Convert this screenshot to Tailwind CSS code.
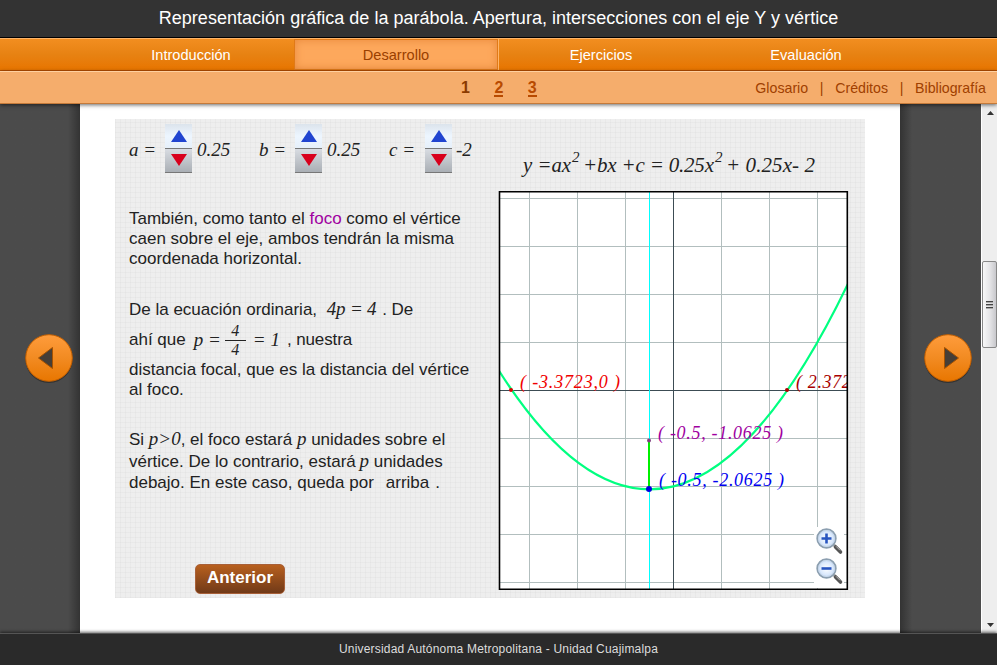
<!DOCTYPE html>
<html lang="es">
<head>
<meta charset="utf-8">
<title>Representación gráfica de la parábola</title>
<script src="https://cdn.jsdelivr.net/npm/@tailwindcss/browser@4"></script>
</head>
<body class="w-[997px] h-[665px] overflow-hidden flex flex-col font-['Liberation_Sans',Arial,sans-serif] bg-[#484848]">
<header class="shrink-0 h-[38px] bg-[#333] border-b border-black flex items-center justify-center text-[18px] tracking-[0.02px] text-white whitespace-nowrap"><span>Representación gráfica de la parábola. Apertura, intersecciones con el eje Y y vértice</span></header>
<nav class="shrink-0 h-[33px] flex text-[14.6px] text-white bg-linear-to-b from-[#f28e20] via-[#e78212] to-[#e87500] border-t border-t-[#ffb468] border-b border-b-[#b84f00] pl-[88px]">
  <a class="w-[206px] flex items-center justify-center pt-[2px]">Introducción</a>
  <a class="w-[204px] flex items-center justify-center pt-[2px] text-[#9a3f00] bg-[#fda85c] border border-[#e07a18] shadow-[inset_0_0_8px_#e8893c]">Desarrollo</a>
  <a class="w-[205px] flex items-center justify-center pt-[2px] border-l border-[#ffb468]">Ejercicios</a>
  <a class="w-[206px] flex items-center justify-center pt-[2px]">Evaluación</a>
</nav>
<div class="shrink-0 h-[33px] flex items-center bg-[#f5ad6c] border-t border-t-[#ffd0a0] border-b border-b-[#c47a3a] text-[#a04000] z-10 shadow-[0_1px_4px_rgba(0,0,0,.6)]">
  <div class="ml-[461px] pt-px flex gap-[24.5px] text-[16px] font-bold leading-[17px]"><span class="text-[#8a3a00]">1</span><span class="border-b-2 border-[#b84a00] text-[#b84a00] h-[18px]">2</span><span class="border-b-2 border-[#b84a00] text-[#b84a00] h-[18px]">3</span></div>
  <div class="ml-auto mr-[11px] pt-[2px] flex text-[14.2px] whitespace-nowrap"><span>Glosario</span><span class="w-[27px] text-center">|</span><span>Créditos</span><span class="w-[27px] text-center">|</span><span>Bibliografía</span></div>
</div>
<main class="h-[529px] shrink-0 flex bg-[#484848]">
  <div class="w-[80px] flex items-center justify-center bg-linear-to-r from-[#4b4b4b] from-85% to-[#333]">
    <svg class="relative left-[9px] -top-[11px]" width="52" height="54" viewBox="0 0 52 54"><defs><linearGradient id="o" x1="0" y1="0" x2="0" y2="1"><stop offset="0" stop-color="#ff9c3c"/><stop offset=".5" stop-color="#f28b22"/><stop offset="1" stop-color="#e87600"/></linearGradient></defs><circle cx="26" cy="28.500" r="23.500" fill="#222" opacity=".6"/><circle cx="26" cy="27" r="23.300" fill="url(#o)" stroke="#c45f00"/><path d="M15.500 27 L29.500 16.500 V37.500Z" fill="#453e37" stroke="#a65200"/></svg>
  </div>
  <div class="w-[820px] bg-white pl-[35px] pt-[15px]">
    <section class="w-[750px] h-[479px] flex bg-[#eee] bg-[repeating-linear-gradient(0deg,rgba(0,0,0,.022)_0_1px,transparent_1px_5px),repeating-linear-gradient(90deg,rgba(0,0,0,.022)_0_1px,transparent_1px_5px)] text-[#222]">
      <div class="w-[383px] pl-[14px] flex flex-col">
        <div class="flex h-[60px] pt-[6px] font-['Liberation_Serif',serif] italic text-[19px] leading-[49px]">
          <div class="w-[130px] flex"><span class="w-[36px] whitespace-nowrap">a =</span><svg class="-mt-px" width="27" height="49" viewBox="0 0 27 49"><defs><linearGradient id="u" x1="0" y1="0" x2="0" y2="1"><stop offset="0" stop-color="#dce4ec"/><stop offset=".5" stop-color="#edf6ff"/><stop offset="1" stop-color="#e6f0fa"/></linearGradient><linearGradient id="d" x1="0" y1="0" x2="0" y2="1"><stop offset="0" stop-color="#d8dce2"/><stop offset="1" stop-color="#aaafb5"/></linearGradient><g id="spin"><path d="M0 0H27V24H0Z" fill="url(#u)"/><path d="M0 25H27V48H0Z" fill="url(#d)"/><path d="M0 24.500H27M0 48.500H27" stroke="#777"/><path d="M14 6L22 18H6Z" fill="#2044d0"/><path d="M14 42L22 30H6Z" fill="#d8001c"/></g></defs><use href="#spin"/></svg><span class="ml-[5px]">0.25</span></div>
          <div class="w-[130px] flex"><span class="w-[36px] whitespace-nowrap">b =</span><svg class="-mt-px" width="27" height="49" viewBox="0 0 27 49"><use href="#spin"/></svg><span class="ml-[5px]">0.25</span></div>
          <div class="flex"><span class="w-[36px] whitespace-nowrap">c =</span><svg class="-mt-px" width="27" height="49" viewBox="0 0 27 49"><use href="#spin"/></svg><span class="ml-[4px]">-2</span></div>
        </div>
        <div class="mt-[30px] text-[17px] leading-[20px] whitespace-nowrap">
          <p>También, como tanto el <span class="text-[#a000a0]">foco</span> como el vértice</p>
          <p>caen sobre el eje, ambos tendrán la misma</p>
          <p>coordenada horizontal.</p>
        </div>
        <div class="mt-[30px] text-[17px] leading-[20px] whitespace-nowrap">
          <p class="h-[21px]">De la ecuación ordinaria, <i class="font-['Liberation_Serif',serif] text-[19px] ml-[5px] mr-px tracking-[-0.2px]">4p = 4</i> . De</p>
          <div class="h-[40px] flex items-center"><span>ahí que</span><i class="font-['Liberation_Serif',serif] text-[19px] ml-[8px]">p =</i><i class="font-['Liberation_Serif',serif] text-[16px] leading-[18px] w-[21px] ml-[4px] flex flex-col text-center"><span class="border-b border-[#222]">4</span><span>4</span></i><i class="font-['Liberation_Serif',serif] text-[19px] ml-[7px]">= 1</i><span class="ml-[7px] tracking-[-0.1px]">, nuestra</span></div>
          <p>distancia focal, que es la distancia del vértice</p>
          <p>al foco.</p>
        </div>
        <div class="mt-[29px] text-[17px] leading-[22px] whitespace-nowrap">
          <p class="h-[22px] leading-[20px]">Si <i class="font-['Liberation_Serif',serif] text-[19px]">p&gt;0</i>, el foco estará <i class="font-['Liberation_Serif',serif] text-[19px]">p</i> unidades sobre el</p>
          <p class="h-[22px] leading-[20px]">vértice. De lo contrario, estará <i class="font-['Liberation_Serif',serif] text-[19px] -ml-px">p</i> unidades</p>
          <p class="leading-[20px]">debajo. En este caso, queda por<span class="ml-[12px] mr-[6px]">arriba</span>.</p>
        </div>
        <button class="mt-auto mb-[4px] ml-[66px] w-[90px] h-[30px] rounded-[5px] border border-[#a86038] bg-linear-to-b from-[#b8601e] to-[#713a18] text-white font-bold text-[17px] leading-[24px] pb-[3px]">Anterior</button>
      </div>
      <div class="w-[351px] flex flex-col">
        <div class="h-[72px]"><svg width="351" height="72" viewBox="498 119 351 72" class="font-['Liberation_Serif',serif] italic" font-size="21" fill="#222"><text x="523" y="172" textLength="48" lengthAdjust="spacingAndGlyphs">y =ax</text><text x="572" y="162" font-size="15">2</text><text x="583" y="172" textLength="131" lengthAdjust="spacing">+bx +c = 0.25x</text><text x="715" y="162" font-size="15">2</text><text x="726" y="172" textLength="89">+ 0.25x- 2</text></svg></div>
        <svg width="351" height="400" viewBox="498 191 351 400" class="font-['Liberation_Serif',serif] italic">
          <defs><clipPath id="c"><path d="M499 191H848V590H499Z"/></clipPath>
          <radialGradient id="l"><stop offset="0" stop-color="#fff"/><stop offset=".7" stop-color="#d9e8fc"/><stop offset="1" stop-color="#bdd4f4"/></radialGradient>
          <g id="lens"><path d="M7 6L13 12" stroke="#aaa" stroke-width="3"/><path d="M9 8.500L14 13.500" stroke="#555" stroke-width="3.600" stroke-linecap="round"/><path d="M9.500 7.800L13.500 11.800" stroke="#bbb"/><circle r="9.300" fill="url(#l)" stroke="#8c9fb0" stroke-width="1.800"/><circle r="8" fill="none" stroke="#c8d7e8"/></g></defs>
          <g clip-path="url(#c)">
            <path d="M499 191H848V590H499Z" fill="#fff"/>
            <path d="M529.500 191V590M577.500 191V590M625.500 191V590M721.500 191V590M769.500 191V590M817.500 191V590M499 198.500H848M499 246.500H848M499 294.500H848M499 342.500H848M499 438.500H848M499 486.500H848M499 534.500H848M499 582.500H848" stroke="#b2bebe"/>
            <path d="M673.500 191V590M499 390.500H848" stroke="#3c4c54"/>
            <path d="M649.500 191V590" stroke="#00ffff"/>
            <path d="M499 370.800Q673.500 645.500 848 283.700" fill="none" stroke="#00ff80" stroke-width="2.200"/>
            <path d="M649 440V489" stroke="#00f000" stroke-width="2"/>
            <circle cx="511" cy="390" r="2" fill="#e00000"/><circle cx="787" cy="390" r="2" fill="#b00000"/><circle cx="649" cy="440.500" r="2" fill="#804080"/><circle cx="649" cy="489" r="3" fill="#0000e0"/>
            <g font-size="18">
              <text x="520" y="388" textLength="100" fill="#f00000">( -3.3723,0 )</text>
              <text x="796" y="388" textLength="91" fill="#a80000">( 2.3723,0 )</text>
              <text x="658" y="439" textLength="125" fill="#a000a0">( -0.5, -1.0625 )</text>
              <text x="659" y="486" textLength="125" fill="#0000f0">( -0.5, -2.0625 )</text>
            </g>
            <path d="M814 527H844V588H814Z" fill="#fff"/>
            <g transform="translate(826.500 538.500)"><use href="#lens"/><path d="M-5 0H5M0 -5V5" stroke="#2855c0" stroke-width="2.600"/></g>
            <g transform="translate(826.500 568.500)"><use href="#lens"/><path d="M-5 0H5" stroke="#2855c0" stroke-width="2.600"/></g>
          </g>
          <path d="M499.500 191.800H847.300V589.200H499.500Z" fill="none" stroke="#000" stroke-width="1.600"/>
        </svg>
      </div>
    </section>
  </div>
  <div class="w-[81px] flex items-center justify-center bg-linear-to-l from-[#4b4b4b] from-85% to-[#333]">
    <svg class="relative left-[7px] -top-[11px]" width="52" height="54" viewBox="0 0 52 54"><circle cx="26" cy="28.500" r="23.500" fill="#222" opacity=".6"/><circle cx="26" cy="27" r="23.300" fill="url(#o)" stroke="#c45f00"/><path d="M36.500 27 L22.500 16.500 V37.500Z" fill="#453e37" stroke="#a65200"/></svg>
  </div>
  <div class="w-[16px] bg-[#eee] border-l border-white flex flex-col items-center justify-between">
    <svg width="15" height="17" viewBox="0 0 15 17"><path d="M5 11L8.500 7L12 11Z" fill="#333"/></svg>
    <div class="w-[15px] h-[87px] relative top-[-64px] rounded-[2px] border border-[#888] bg-linear-to-r from-[#f8f8f8] via-[#e6e6e8] to-[#c8c8cc] flex flex-col items-center justify-center gap-px"><i class="w-[7px] h-[2px] border-t border-[#444] bg-[#aaa]"></i><i class="w-[7px] h-[2px] border-t border-[#444] bg-[#aaa]"></i><i class="w-[7px] h-[2px] border-t border-[#444] bg-[#aaa]"></i></div>
    <svg width="15" height="17" viewBox="0 0 15 17"><path d="M5 7L8.500 11L12 7Z" fill="#333"/></svg>
  </div>
</main>
<footer class="grow bg-[#2a2a2a] border-t border-[#555] shadow-[0_-1px_3px_rgba(0,0,0,.6)] z-10 flex items-center justify-center text-[12px] tracking-[0.19px] text-[#ddd]"><span class="whitespace-nowrap relative -top-px">Universidad Autónoma Metropolitana - Unidad Cuajimalpa</span></footer>
</body>
</html>
